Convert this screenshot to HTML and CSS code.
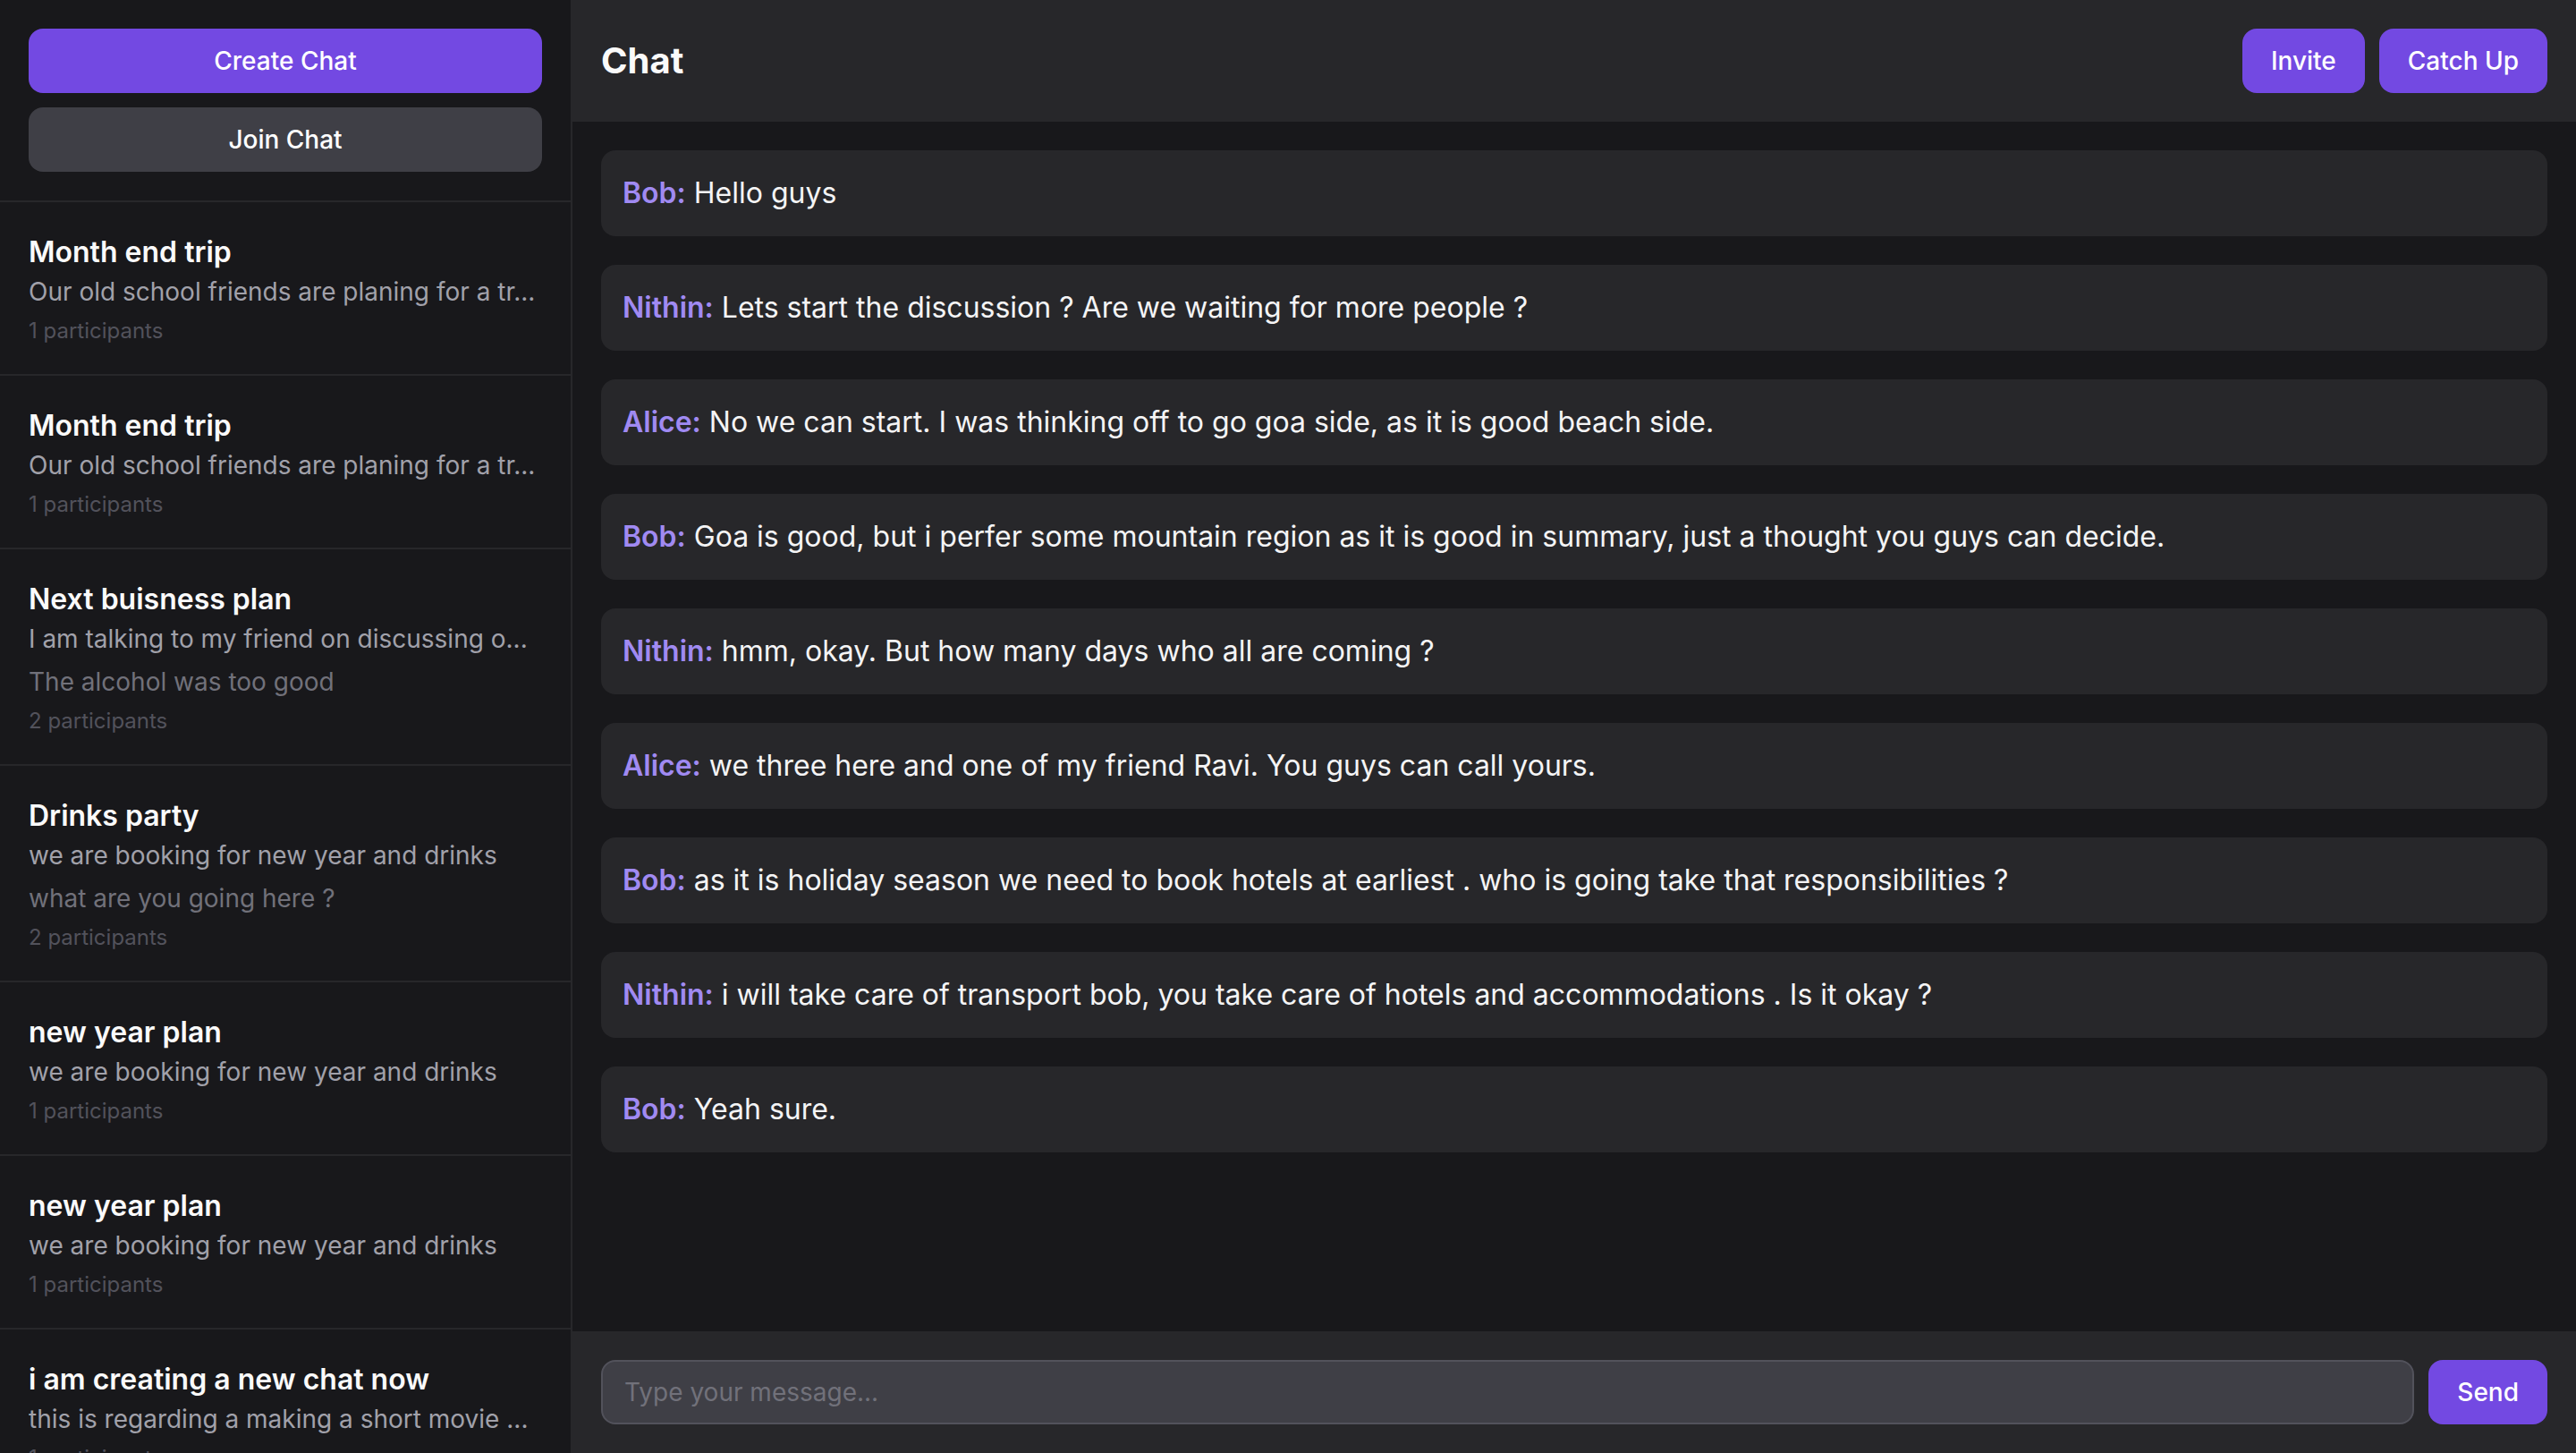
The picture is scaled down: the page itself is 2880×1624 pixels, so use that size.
FILE: index.html
```html
<!DOCTYPE html>
<html lang="en">
<head>
<meta charset="utf-8">
<title>Chat</title>
<link rel="stylesheet" href="styles.css">
</head>
<body>
<div class="app">
  <aside class="sidebar">
    <div class="sidebar-actions">
      <button class="btn btn-primary btn-block">Create Chat</button>
      <button class="btn btn-secondary btn-block">Join Chat</button>
    </div>
    <div class="chat-list">
      <div class="chat-item">
        <div class="chat-title">Month end trip</div>
        <div class="chat-desc">Our old school friends are planing for a tr...</div>
        <div class="chat-meta">1 participants</div>
      </div>
      <div class="chat-item">
        <div class="chat-title">Month end trip</div>
        <div class="chat-desc">Our old school friends are planing for a tr...</div>
        <div class="chat-meta">1 participants</div>
      </div>
      <div class="chat-item">
        <div class="chat-title">Next buisness plan</div>
        <div class="chat-desc">I am talking to my friend on discussing o...</div>
        <div class="chat-last">The alcohol was too good</div>
        <div class="chat-meta">2 participants</div>
      </div>
      <div class="chat-item">
        <div class="chat-title">Drinks party</div>
        <div class="chat-desc">we are booking for new year and drinks</div>
        <div class="chat-last">what are you going here ?</div>
        <div class="chat-meta">2 participants</div>
      </div>
      <div class="chat-item">
        <div class="chat-title">new year plan</div>
        <div class="chat-desc">we are booking for new year and drinks</div>
        <div class="chat-meta">1 participants</div>
      </div>
      <div class="chat-item">
        <div class="chat-title">new year plan</div>
        <div class="chat-desc">we are booking for new year and drinks</div>
        <div class="chat-meta">1 participants</div>
      </div>
      <div class="chat-item">
        <div class="chat-title">i am creating a new chat now</div>
        <div class="chat-desc">this is regarding a making a short movie ...</div>
        <div class="chat-meta">1 participants</div>
      </div>
    </div>
  </aside>
  <main class="main">
    <header class="header">
      <h1 class="header-title">Chat</h1>
      <div class="header-actions">
        <button class="btn btn-primary">Invite</button>
        <button class="btn btn-primary">Catch Up</button>
      </div>
    </header>
    <section class="messages">
      <div class="message"><span class="author">Bob:</span> Hello guys</div>
      <div class="message"><span class="author">Nithin:</span> Lets start the discussion ? Are we waiting for more people ?</div>
      <div class="message"><span class="author">Alice:</span> No we can start. I was thinking off to go goa side, as it is good beach side.</div>
      <div class="message"><span class="author">Bob:</span> Goa is good, but i perfer some mountain region as it is good in summary, just a thought you guys can decide.</div>
      <div class="message"><span class="author">Nithin:</span> hmm, okay. But how many days who all are coming ?</div>
      <div class="message"><span class="author">Alice:</span> we three here and one of my friend Ravi. You guys can call yours.</div>
      <div class="message"><span class="author">Bob:</span> as it is holiday season we need to book hotels at earliest . who is going take that responsibilities ?</div>
      <div class="message"><span class="author">Nithin:</span> i will take care of transport bob, you take care of hotels and accommodations . Is it okay ?</div>
      <div class="message"><span class="author">Bob:</span> Yeah sure.</div>
    </section>
    <footer class="composer">
      <input class="composer-input" type="text" placeholder="Type your message...">
      <button class="btn btn-primary">Send</button>
    </footer>
  </main>
</div>
</body>
</html>
```

FILE: styles.css
```css
* { box-sizing: border-box; }

html, body {
  margin: 0;
  padding: 0;
  height: 100%;
  overflow: hidden;
  background: #18181b;
  font-family: Inter, "Noto Sans", "Liberation Sans", sans-serif;
  color: #f4f4f5;
}

.app {
  display: flex;
  height: 1624px;
}

.sidebar {
  width: 640px;
  flex: 0 0 640px;
  background: #18181b;
  border-right: 2px solid #27272a;
  display: flex;
  flex-direction: column;
  overflow: hidden;
}

.sidebar-actions {
  display: flex;
  flex-direction: column;
  gap: 16px;
  padding: 32px;
  border-bottom: 2px solid #27272a;
}

.btn {
  font-family: inherit;
  font-size: 28px;
  font-weight: 500;
  line-height: 40px;
  height: 72px;
  padding: 16px 32px;
  border: none;
  border-radius: 16px;
  color: #ffffff;
  cursor: pointer;
  white-space: nowrap;
}

.btn-block { width: 100%; }

.btn-primary { background: #7349e2; }

.btn-secondary { background: #3f3f46; }

.chat-list {
  display: flex;
  flex-direction: column;
}

.chat-item {
  padding: 32px;
  border-bottom: 2px solid #27272a;
}

.chat-title {
  font-size: 32px;
  line-height: 48px;
  font-weight: 600;
  color: #fafafa;
  white-space: nowrap;
  overflow: hidden;
}

.chat-desc {
  font-size: 28px;
  line-height: 40px;
  color: #a1a1aa;
  white-space: nowrap;
  overflow: hidden;
}

.chat-last {
  margin-top: 8px;
  font-size: 28px;
  line-height: 40px;
  color: #71717a;
  white-space: nowrap;
  overflow: hidden;
}

.chat-meta {
  margin-top: 8px;
  font-size: 24px;
  line-height: 32px;
  color: #52525b;
}

.main {
  flex: 1;
  display: flex;
  flex-direction: column;
  min-width: 0;
  background: #18181b;
}

.header {
  display: flex;
  align-items: center;
  justify-content: space-between;
  padding: 32px;
  height: 136px;
  background: #27272a;
}

.header-title {
  margin: 0;
  font-size: 40px;
  line-height: 56px;
  font-weight: 700;
  color: #fafafa;
}

.header-actions {
  display: flex;
  gap: 16px;
}

.messages {
  flex: 1;
  display: flex;
  flex-direction: column;
  gap: 32px;
  padding: 32px;
  overflow: hidden;
}

.message {
  background: #27272a;
  border-radius: 16px;
  padding: 24px;
  font-size: 32px;
  line-height: 48px;
  color: #f4f4f5;
}

.author {
  font-weight: 600;
  color: #a08af2;
}

.composer {
  display: flex;
  gap: 16px;
  padding: 32px;
  background: #27272a;
}

.composer-input {
  flex: 1;
  height: 72px;
  padding: 0 24px;
  font-family: inherit;
  font-size: 28px;
  color: #f4f4f5;
  background: #3f3f46;
  border: 2px solid #52525b;
  border-radius: 16px;
  outline: none;
}

.composer-input::placeholder { color: #71717a; }
```
